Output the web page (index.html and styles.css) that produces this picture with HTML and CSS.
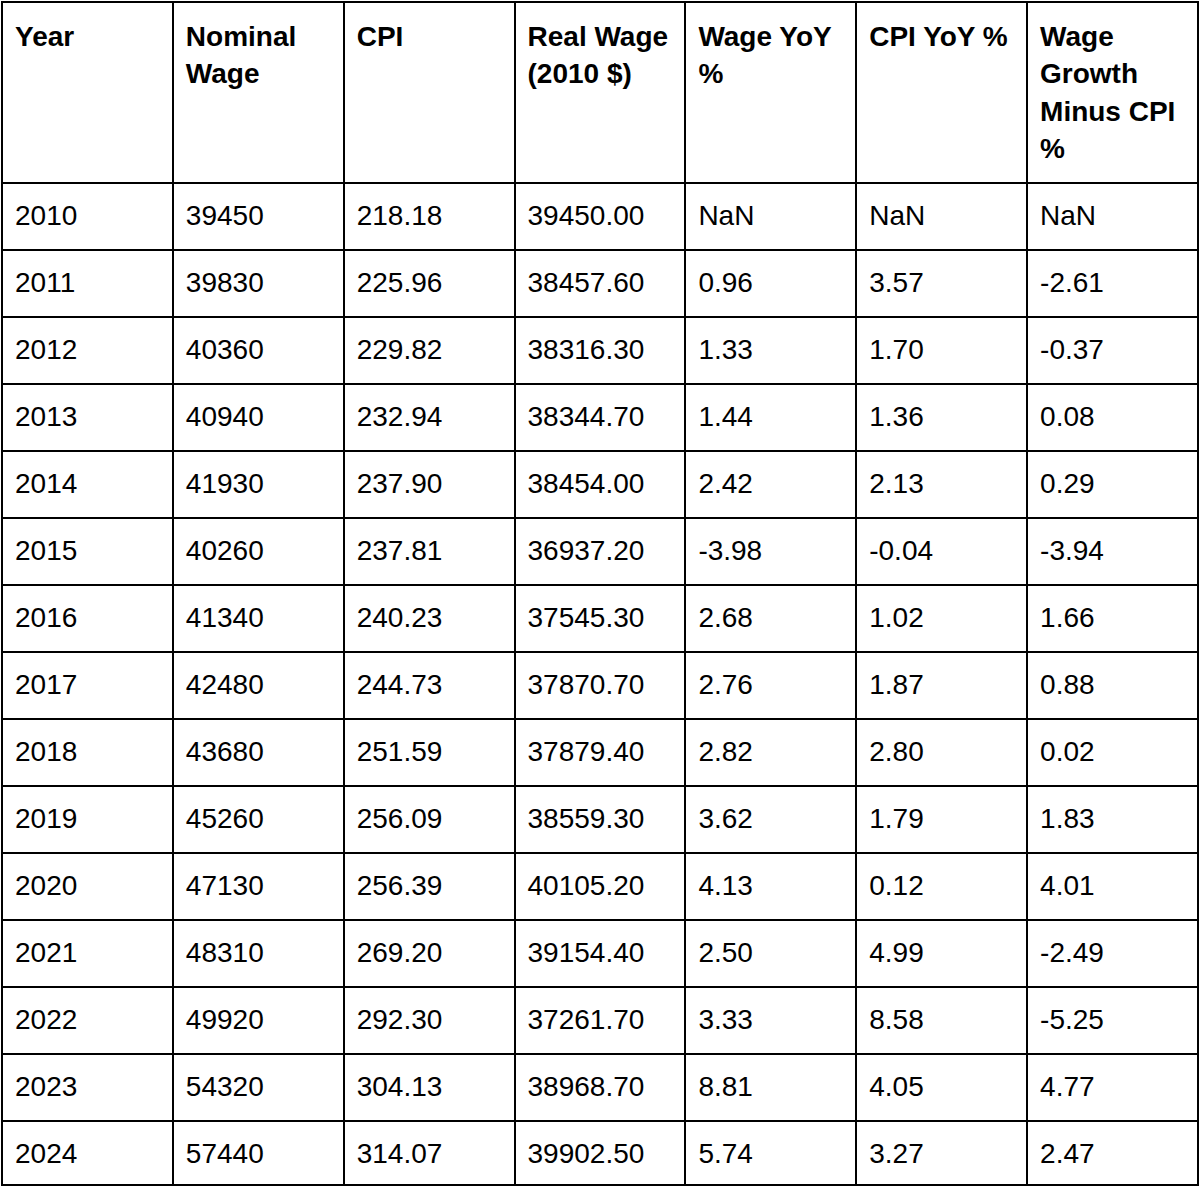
FILE: index.html
```html
<!DOCTYPE html>
<html lang="en">
<head>
<meta charset="utf-8">
<title>Real Wage Table</title>
<link rel="stylesheet" href="styles.css">
</head>
<body>
<table class="data-table">
  <thead>
    <tr>
      <th>Year</th>
      <th>Nominal Wage</th>
      <th>CPI</th>
      <th>Real Wage (2010 $)</th>
      <th>Wage YoY %</th>
      <th>CPI YoY %</th>
      <th>Wage Growth Minus CPI %</th>
    </tr>
  </thead>
  <tbody>
    <tr><td>2010</td><td>39450</td><td>218.18</td><td>39450.00</td><td>NaN</td><td>NaN</td><td>NaN</td></tr>
    <tr><td>2011</td><td>39830</td><td>225.96</td><td>38457.60</td><td>0.96</td><td>3.57</td><td>-2.61</td></tr>
    <tr><td>2012</td><td>40360</td><td>229.82</td><td>38316.30</td><td>1.33</td><td>1.70</td><td>-0.37</td></tr>
    <tr><td>2013</td><td>40940</td><td>232.94</td><td>38344.70</td><td>1.44</td><td>1.36</td><td>0.08</td></tr>
    <tr><td>2014</td><td>41930</td><td>237.90</td><td>38454.00</td><td>2.42</td><td>2.13</td><td>0.29</td></tr>
    <tr><td>2015</td><td>40260</td><td>237.81</td><td>36937.20</td><td>-3.98</td><td>-0.04</td><td>-3.94</td></tr>
    <tr><td>2016</td><td>41340</td><td>240.23</td><td>37545.30</td><td>2.68</td><td>1.02</td><td>1.66</td></tr>
    <tr><td>2017</td><td>42480</td><td>244.73</td><td>37870.70</td><td>2.76</td><td>1.87</td><td>0.88</td></tr>
    <tr><td>2018</td><td>43680</td><td>251.59</td><td>37879.40</td><td>2.82</td><td>2.80</td><td>0.02</td></tr>
    <tr><td>2019</td><td>45260</td><td>256.09</td><td>38559.30</td><td>3.62</td><td>1.79</td><td>1.83</td></tr>
    <tr><td>2020</td><td>47130</td><td>256.39</td><td>40105.20</td><td>4.13</td><td>0.12</td><td>4.01</td></tr>
    <tr><td>2021</td><td>48310</td><td>269.20</td><td>39154.40</td><td>2.50</td><td>4.99</td><td>-2.49</td></tr>
    <tr><td>2022</td><td>49920</td><td>292.30</td><td>37261.70</td><td>3.33</td><td>8.58</td><td>-5.25</td></tr>
    <tr><td>2023</td><td>54320</td><td>304.13</td><td>38968.70</td><td>8.81</td><td>4.05</td><td>4.77</td></tr>
    <tr><td>2024</td><td>57440</td><td>314.07</td><td>39902.50</td><td>5.74</td><td>3.27</td><td>2.47</td></tr>
  </tbody>
</table>
</body>
</html>
```
FILE: styles.css
```css
html, body {
  background: #ffffff;
}
body {
  margin: 1px;
  font-family: "Liberation Sans", Arial, sans-serif;
  color: #000000;
}
.data-table {
  width: 1198px;
  table-layout: fixed;
  border-collapse: collapse;
  font-size: 28px;
  line-height: 37.33px;
}
.data-table th,
.data-table td {
  border: 2px solid #000000;
  text-align: left;
  vertical-align: top;
  padding-left: 12px;
  padding-right: 12px;
}
.data-table th {
  font-weight: bold;
  padding-top: 15px;
  padding-bottom: 14.4px;
}
.data-table td {
  font-weight: normal;
  padding-top: 12.8px;
  padding-bottom: 14.9px;
}
.data-table tbody tr:last-child td {
  padding-bottom: 12.4px;
}
```
